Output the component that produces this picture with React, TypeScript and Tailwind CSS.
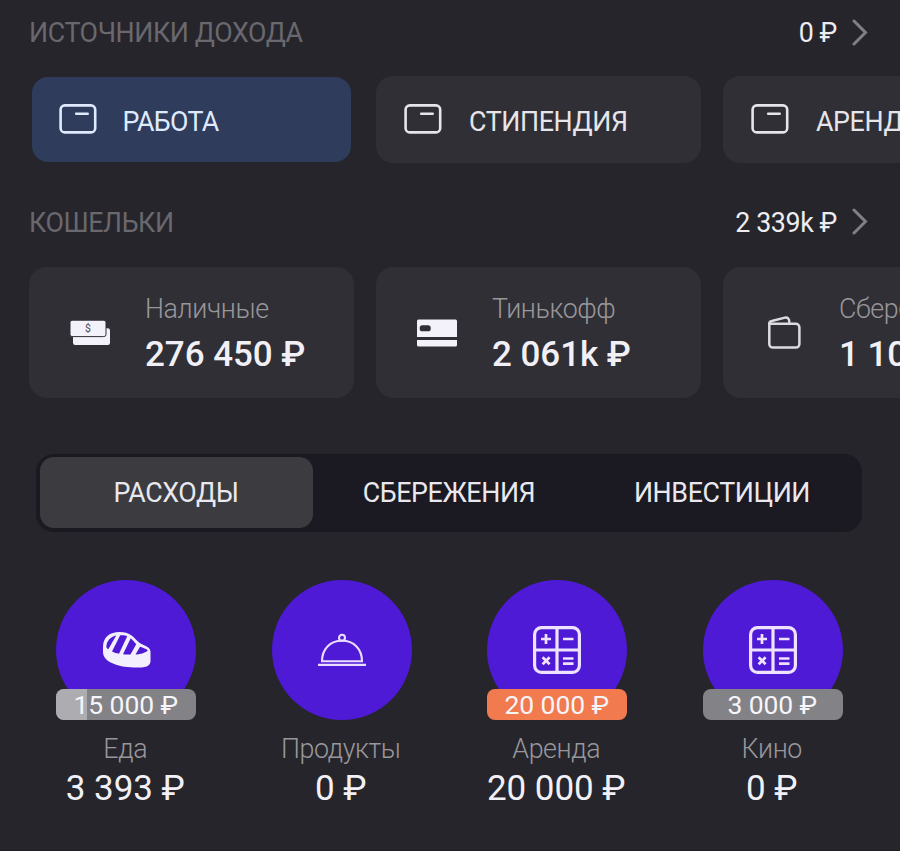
import React from 'react';

type IconProps = { className?: string };

const CardIcon = ({ className = '' }: IconProps) => (
  <svg className={className} width="38" height="30" viewBox="0 0 38 30" fill="none" stroke="currentColor" strokeLinecap="round">
    <rect x="1.6" y="1.4" width="34.6" height="27" rx="4.2" strokeWidth="2.6" />
    <path d="M17.2 9.8h11.5" strokeWidth="2.6" />
  </svg>
);

const CashIcon = ({ className = '' }: IconProps) => (
  <svg className={className} width="42" height="28" viewBox="0 0 42 28">
    <rect x="4" y="9.3" width="37" height="16.7" rx="2.2" fill="#f3f1fa" />
    <rect x="1" y="1.2" width="36" height="16.4" rx="2.2" fill="#f3f1fa" stroke="#302f35" strokeWidth="1" />
    <text x="19" y="13.2" textAnchor="middle" className="font-['Roboto',sans-serif] text-[10.5px]" fill="#4a4950">$</text>
  </svg>
);

const CreditIcon = ({ className = '' }: IconProps) => (
  <svg className={className} width="42" height="28" viewBox="0 0 42 28" fill="#f3f1fa">
    <path d="M2.5 0.5h37a1.5 1.5 0 0 1 1.5 1.5v16H1v-16a1.5 1.5 0 0 1 1.5-1.5z" />
    <path d="M1 21h40v5a1.5 1.5 0 0 1-1.5 1.5h-37a1.5 1.5 0 0 1-1.5-1.5z" />
    <rect x="3.7" y="6.3" width="11" height="6" rx="2.6" fill="#302f35" />
  </svg>
);

const WalletIcon = ({ className = '' }: IconProps) => (
  <svg className={className} width="35" height="33" viewBox="0 0 35 33" fill="none" stroke="currentColor" strokeWidth="2.5" strokeLinecap="round" strokeLinejoin="round">
    <path d="M2.3 7.8h26.5a3.6 3.6 0 0 1 3.6 3.6v16.6a3.6 3.6 0 0 1-3.6 3.6H5.9a3.6 3.6 0 0 1-3.6-3.6z" />
    <path d="M2.3 7.8C2.3 6 3.3 5.3 4.8 5L18 1.6c2.5-.6 4.3 1 4.3 4.4" />
  </svg>
);

const SteakIcon = () => (
  <svg className="ml-[2px]" width="50" height="38" viewBox="0 0 50 38">
    <path d="M1 16C1 6 8 1 17.5 1C28 1 31 5.5 36 10.5c4 4.3 12.5 4.5 12.5 10V30c0 4.5-4 6.5-11 6.5C20 37 1 32.5 1 21z" fill="#f3effd" />
    <g fill="#4e1ad6">
      <path d="M4.3 15.5C5 9.5 8.5 6 14.2 4.6L6.3 18.3C5 17.5 4.3 16.7 4.3 15.5z" />
      <path d="M18.2 4.3c3-.2 5 0 7 .9L17 22.8c-2.8-.4-4.5-1-7-2.200z" />
      <path d="M28.7 7.3c2 1.8 3.5 3.8 5.5 6l-5.7 10.2c-2.5.2-4.8.1-7.5-.2z" />
      <path d="M38 15.8c3 1 6.5 2.2 7.8 3.6c-2 2-7 3.6-12.3 4.2z" />
    </g>
  </svg>
);

const ClocheIcon = () => (
  <svg width="50" height="34" viewBox="0 0 50 34" fill="none" stroke="#e9dcff" strokeWidth="2.1">
    <circle cx="25" cy="4.8" r="3" />
    <path d="M5 28.3C5 16 13 7.8 25 7.8s20 8.2 20 20.5z" />
    <path d="M1 31.9h48" strokeWidth="2.2" />
  </svg>
);

const CalcIcon = () => (
  <svg width="48" height="48" viewBox="0 0 48 48" fill="none" stroke="#eee2ff" strokeWidth="3.2">
    <rect x="1.6" y="1.6" width="44.8" height="44.8" rx="6.8" />
    <path d="M24 1.6v44.8M1.6 24h44.8" />
    <path d="M8 13h10M13 8v10M30 13h10.5M9.6 31.3l7 7M16.6 31.3l-7 7M30 32.5h10.5M30 37.7h10.5" strokeWidth="2.7" />
  </svg>
);

const Chevron = () => (
  <svg width="16" height="28" viewBox="0 0 16 28" fill="none" stroke="#817f85" strokeWidth="3" strokeLinecap="round">
    <path d="M2 2L13.5 13.5L2 25" />
  </svg>
);

const SectionHeader = ({ title, total, className }: { title: string; total: string; className: string }) => (
  <header className={`flex shrink-0 items-center justify-between pl-[29px] pr-[32px] ${className}`}>
    <h2 className="pt-[2px] text-[26.8px] tracking-[-0.4px] text-[#69686e]">{title}</h2>
    <div className="flex items-center gap-[15px] text-[26.8px] tracking-[-0.4px] text-[#ececf1]">
      <span className="pt-[2px]">{total}</span>
      <Chevron />
    </div>
  </header>
);

const sources = ['РАБОТА', 'СТИПЕНДИЯ', 'АРЕНДА'];

const wallets = [
  { name: 'Наличные', sum: '276 450 ₽', icon: <CashIcon /> },
  { name: 'Тинькофф', sum: '2 061k ₽', icon: <CreditIcon /> },
  { name: 'Сбербанк', sum: '1 100k ₽', icon: <WalletIcon className="text-[#dcdbe0]" /> },
];

const expenses = [
  { name: 'Еда', sum: '3 393 ₽', limit: '15 000 ₽', badge: 'bg-[#838286]', used: 22, icon: <SteakIcon /> },
  { name: 'Продукты', sum: '0 ₽', limit: null, badge: '', used: 0, icon: <ClocheIcon /> },
  { name: 'Аренда', sum: '20 000 ₽', limit: '20 000 ₽', badge: 'bg-[#f17a4e]', used: 0, icon: <CalcIcon /> },
  { name: 'Кино', sum: '0 ₽', limit: '3 000 ₽', badge: 'bg-[#838286]', used: 0, icon: <CalcIcon /> },
];

export default function App() {
  return (
    <main className="flex h-[851px] w-[900px] flex-col overflow-hidden border-b border-[#1f1d22] bg-[#26252b] font-['Roboto',sans-serif] whitespace-nowrap">
      <SectionHeader title="ИСТОЧНИКИ ДОХОДА" total="0 ₽" className="h-[76px] pb-[11px]" />
      <section className="flex h-[87px] shrink-0 gap-[22.5px] pl-[29px]">
        {sources.map((s, i) => (
          <div
            key={s}
            className={
              i === 0
                ? 'mx-[2.5px] my-px flex w-[319.5px] shrink-0 items-center gap-[26px] rounded-[16px] bg-[#2f3c5b] pl-[27px] tracking-[-0.65px] text-[#dfeaff]'
                : 'flex w-[324.5px] shrink-0 items-center gap-[27px] rounded-[17px] bg-[#302f35] pl-[28px] tracking-[-0.4px] text-[#e6e5ea]'
            }
          >
            <CardIcon className="mb-[2px]" />
            <span className="pt-[5px] text-[26.8px]">{s}</span>
          </div>
        ))}
      </section>

      <SectionHeader title="КОШЕЛЬКИ" total="2 339k ₽" className="h-[104px] pt-[14px]" />
      <section className="flex h-[131px] shrink-0 gap-[22.5px] pl-[29px]">
        {wallets.map((w) => (
          <div key={w.name} className="flex w-[324.5px] shrink-0 items-center rounded-[18px] bg-[#302f35] pl-[40px]">
            <div className="flex w-[42px] justify-center">{w.icon}</div>
            <div className="flex flex-col pl-[34px]">
              <span className="pt-px text-[26.8px] leading-[40px] font-light tracking-[-0.4px] text-[#98979c]">{w.name}</span>
              <span className="pt-[4px] text-[35px] leading-[44px] font-medium tracking-[-0.05px] text-[#f1f0f6]">{w.sum}</span>
            </div>
          </div>
        ))}
      </section>

      <nav className="mt-[55.5px] ml-[36px] flex h-[78px] w-[826px] shrink-0 rounded-[18px] bg-[#1b1921] p-[3.5px] text-[26.8px] tracking-[-0.4px] text-[#e9e8ee]">
        <button className="w-[273px] rounded-[14px] bg-[#3c3b40] pt-[2px]">РАСХОДЫ</button>
        <button className="w-[273px] pt-[2px]">СБЕРЕЖЕНИЯ</button>
        <button className="w-[273px] pt-[2px]">ИНВЕСТИЦИИ</button>
      </nav>

      <section className="mt-[48.5px] ml-[18.5px] grid shrink-0 grid-cols-[repeat(4,215.5px)]">
        {expenses.map((e) => (
          <article key={e.name} className="flex flex-col items-center">
            <div className="relative flex size-[140px] items-center justify-center rounded-full bg-[#4e1ad6]">
              {e.icon}
              {e.limit && (
                <div className={`absolute inset-x-0 bottom-0 flex h-[31px] items-center justify-center overflow-hidden rounded-[8px] ${e.badge}`}>
                  <div className="absolute inset-y-0 left-0 bg-[#adacb0]" style={{ width: `${e.used}%` }} />
                  <span className="relative pt-px pr-px text-[26.5px] leading-none tracking-[-0.1px] text-[#f6f5f9]">{e.limit}</span>
                </div>
              )}
            </div>
            <span className="mt-[9px] pr-[2px] text-[26.8px] leading-[40px] font-light tracking-[-0.4px] text-[#98979c]">{e.name}</span>
            <span className="pr-[2px] text-[35px] leading-[40px] tracking-[-0.05px] text-[#f1f0f6]">{e.sum}</span>
          </article>
        ))}
      </section>
    </main>
  );
}
